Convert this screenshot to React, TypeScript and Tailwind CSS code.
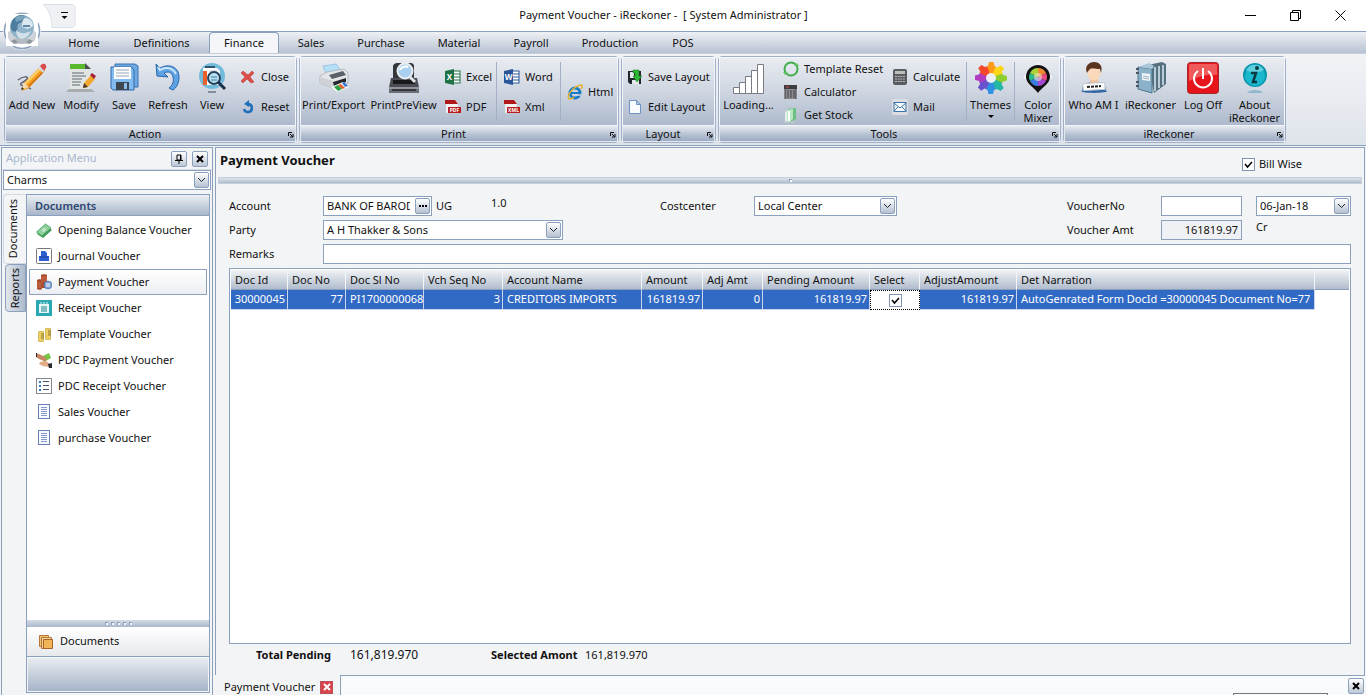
import type { ReactNode } from "react"
import clsx from "clsx"

/* ---------- icons ---------- */

function Svg({ size = 32, children }: { size?: number; children: ReactNode }) {
  return (
    <svg width={size} height={size} viewBox={size === 16 ? "0 0 16 16" : "0 0 32 32"} fill="none" className="shrink-0" aria-hidden="true">
      {children}
    </svg>
  )
}

const GlobeLogo = () => (
  <svg width="42" height="42" viewBox="0 0 42 42" fill="none" aria-hidden="true">
    <circle cx="21" cy="21" r="19" fill="#e9edf2" />
    <circle cx="21" cy="21" r="17.500" fill="#fff" stroke="#8ba0bd" strokeWidth="1.500" />
    <path d="M5 4h32v32H5z" fill="#fff" />
    <ellipse cx="21" cy="29" rx="13" ry="5" fill="#b4bbc1" />
    <path d="M7 22l5-3 5 8-5 6-5-5zM35 22l-5-3-5 8 5 6 5-5z" fill="#cdd3d8" />
    <path d="M10 31l4-2 3 4-4 1zM32 31l-4-2-3 4 4 1z" fill="#8e979e" />
    <circle cx="21" cy="17" r="12" fill="#8fb3ca" />
    <path d="M11 11c4-6 9-7 13-5l-3 6-4 2-1 8-5-1c-2-4-1-7 0-10z" fill="#4c7d9f" />
    <path d="M14 8c3-3 7-3 10-2l-3 4-6 2z" fill="#7aa3bd" />
    <path d="M24 8c5 0 8 4 8 8l-5 3-6-2c0-4 0-7 3-9z" fill="#dbe8f0" />
    <path d="M15 20c4 4 9 4 15 1-2 5-6 8-10 8-3-1-5-4-5-9z" fill="#d3e0e8" />
    <path d="M22 16h7" stroke="#5e8aa8" strokeWidth="2" />
  </svg>
)

const PencilIcon = () => (
  <Svg>
    <path d="M2 18c5-4 11-4 9-1s-8 4-6 6 6 1 10 4" stroke="#5f6671" strokeWidth="1.500" />
    <path d="M8 21L24 5l5 4-16 17-7 3z" fill="#f5a020" />
    <path d="M9 22L25 6" stroke="#ffd36b" strokeWidth="2" />
    <path d="M12 25L28 9" stroke="#cf6d10" strokeWidth="1.500" />
    <path d="M22 6l5 5 2-2-5-5z" fill="#d5dae0" />
    <path d="M24 4l2-2c3-1 5 1 4 4l-2 3z" fill="#d94b4b" />
    <path d="M8 21l-3 7 8-3z" fill="#f3d9ad" />
    <path d="M6 25l-1 3 3-1z" fill="#222" />
  </Svg>
)

const ModifyIcon = () => (
  <Svg>
    <path d="M5 2h20v27H3l2-4z" fill="#e3e5e5" />
    <path d="M1 30h29l-4-3H4z" fill="#a8adb0" />
    <path d="M5 2h15l5 5H5z" fill="#58b82c" />
    <path d="M20 1l6 6h-6z" fill="#4b5052" />
    <path d="M7 11h12M7 14h14M7 17h10M7 20h9M7 23h8" stroke="#8b9296" strokeWidth="1.500" />
    <path d="M19 21l7-8 4 4-7 8-5 1z" fill="#f3a72d" />
    <path d="M25 13l2-2 4 3-2 3z" fill="#a32035" />
    <path d="M18 26l1-5 4 4z" fill="#4a3a28" />
  </Svg>
)

const SaveIcon = () => (
  <Svg>
    <path d="M7 2h20l3 2v21H7z" fill="#6ea8e0" stroke="#3a72b4" />
    <path d="M3 5h20l3 3v20H5l-2-2z" fill="#82bbef" stroke="#2f69ad" />
    <rect x="6" y="5" width="17" height="12" fill="#fbfcfe" />
    <path d="M8 8h13M8 11h13M8 14h13" stroke="#9aa6b5" />
    <rect x="8" y="20" width="13" height="8" fill="#3d4651" />
    <rect x="16" y="21" width="3" height="6" fill="#8cbdec" />
  </Svg>
)

const RefreshIcon = () => (
  <Svg>
    <path d="M5 14L4 2l4 4c9-5 19-1 19 9 0 7-3 11-6 13l-4-2c4-3 5-7 4-11-1-5-5-6-9-4l4 4z" fill="#5da3e4" stroke="#2a64a8" strokeLinejoin="round" />
    <path d="M6 5l2 3c6-4 13-2 16 4" stroke="#cde6fb" strokeWidth="2" />
  </Svg>
)

const ViewIcon = () => (
  <Svg>
    <circle cx="16" cy="14" r="13" fill="#73bbdb" />
    <path d="M7 6h14l3 3v14H7z" fill="#fff" />
    <path d="M9 5h10" stroke="#35556f" strokeWidth="2" />
    <path d="M7 9h4v14H7z" fill="#e8612a" />
    <path d="M13 9h8" stroke="#b5bec6" />
    <circle cx="18" cy="16" r="6" fill="#b9e1f2" stroke="#26425e" strokeWidth="2" />
    <path d="M15 15h6M15 18h6" stroke="#43789b" />
    <path d="M22 20l7 7" stroke="#17304b" strokeWidth="3" />
    <path d="M12 30h8" stroke="#858d98" strokeWidth="2" />
  </Svg>
)

const CloseIcon = () => (
  <Svg size={16}>
    <path d="M3 2l5 4 4-4 2 2-4 4 4 5-3 1-4-4-4 4-2-2 4-4-4-4z" fill="#dd4f4a" stroke="#b93030" strokeWidth="0.500" />
  </Svg>
)

const ResetIcon = () => (
  <Svg size={16}>
    <path d="M8 5a4 4 0 1 1-4 5" stroke="#1f70b8" strokeWidth="2.500" />
    <path d="M4 5l5-4v7z" fill="#1f70b8" />
  </Svg>
)

const PrinterIcon = () => (
  <Svg>
    <path d="M5 4l13-2 6 8-15 4z" fill="#b5def7" stroke="#6aa9d0" strokeWidth="0.500" />
    <path d="M2 14l7-4 17-3 4 4v10l-13 6-15-6z" fill="#e3e5e8" stroke="#8c9197" strokeWidth="0.500" />
    <path d="M11 13l14-4 3 4-14 4z" fill="#5a6067" />
    <path d="M2 15l13 4v7L2 21z" fill="#cfd2d6" />
    <path d="M15 20l13-4v4l-12 5z" fill="#24282d" />
    <path d="M13 25l12-5 6 5-12 5z" fill="#f6faf6" />
    <path d="M16 25l4-2 4 4-4 2z" fill="#28a048" />
    <path d="M20 23l3-1 4 4-3 1z" fill="#e2602a" />
    <path d="M24 21l2-1 4 4-3 1z" fill="#3b78d6" />
  </Svg>
)

const PreviewIcon = () => (
  <Svg>
    <path d="M5 5c0-3 2-4 5-4h12c3 0 4 1 4 4v14H5z" fill="#33363b" />
    <path d="M3 16h26l2 9H1z" fill="#4b4f55" />
    <path d="M5 18h22v4H5z" fill="#17191b" />
    <rect x="1" y="25" width="30" height="6" fill="#6b6f75" />
    <path d="M1 26h30" stroke="#b9bdc3" />
    <path d="M4 28h24" stroke="#34373b" strokeWidth="2" />
    <circle cx="17" cy="9" r="7.500" fill="#a9d0ef" stroke="#e9edf1" strokeWidth="2" />
    <path d="M12 8c1-3 5-4 8-3" stroke="#fff" strokeWidth="2" />
    <path d="M22 15l5 5" stroke="#dfe3e8" strokeWidth="3" />
  </Svg>
)

const OfficeIcon = ({ color, letter }: { color: string; letter: string }) => (
  <Svg size={16}>
    <rect x="8" y="2" width="7" height="12" fill="#fff" stroke={color} />
    <path d="M9 5h6M9 8h6M9 11h6" stroke={color} />
    <path d="M0 2l9-2v16l-9-2z" fill={color} />
    <text x="4.500" y="11" textAnchor="middle" fill="#fff" className="font-['Noto_Sans'] text-[8px] font-bold">{letter}</text>
  </Svg>
)

const FileTagIcon = ({ tag }: { tag: string }) => (
  <Svg size={16}>
    <path d="M1 1h9l3 3v10H1z" fill="#f4f4f5" stroke="#cfd1d5" strokeWidth="0.500" />
    <path d="M0 1h10l3 4H0z" fill="#b01919" />
    <rect x="3" y="8" width="13" height="6" fill="#b81c1c" />
    <text x="9.500" y="13" textAnchor="middle" fill="#fff" className="font-['Noto_Sans'] text-[5px] font-bold">{tag}</text>
  </Svg>
)

const HtmlIcon = () => (
  <Svg size={16}>
    <circle cx="8" cy="9" r="5" stroke="#1a7cc4" strokeWidth="3" />
    <path d="M4 9h8" stroke="#1a7cc4" strokeWidth="2" />
    <path d="M9 11h7" stroke="#cdd5e0" strokeWidth="1.500" />
    <path d="M2 15C-1 11 7 2 14 1c2 0 1 3 0 4" stroke="#e3b12a" strokeWidth="1.500" />
    <path d="M2 15c2 0 4-1 5-2" stroke="#e3b12a" strokeWidth="1.500" />
  </Svg>
)

const SaveLayoutIcon = () => (
  <Svg size={16}>
    <path d="M1 2h13v13H3l-2-2z" fill="#22262a" />
    <path d="M3 3h4v6H3zM5 11h7v4H5z" fill="#e5e8eb" />
    <path d="M6 1h6v6h3l-5 6-4-6h2V4H6z" fill="#2fb636" stroke="#14801b" strokeWidth="0.500" />
  </Svg>
)

const PageIcon = () => (
  <Svg size={16}>
    <path d="M2.500 1.500h7l4 4v9h-11z" fill="#f8fbff" stroke="#6d93c4" />
    <path d="M9.500 1.500v4h4z" fill="#b5cdec" stroke="#6d93c4" />
  </Svg>
)

const BarsIcon = () => (
  <Svg>
    <path d="M0.500 25.500h6v6h-6zM6.500 20.500h6v11h-6zM12.500 14.500h6v17h-6zM18.500 8.500h6v23h-6zM24.500 2.500h6v29h-6z" fill="#fff" stroke="#777b82" />
  </Svg>
)

const RingIcon = () => (
  <Svg size={16}>
    <circle cx="8" cy="8" r="6.500" stroke="#42ad4c" strokeWidth="2" />
    <path d="M0 11h5l-3 3zM16 5h-5l3-3z" fill="#5fc468" />
  </Svg>
)

const CalcIcon = () => (
  <Svg size={16}>
    <path d="M1 1h13v4H1z" fill="#3c3b40" />
    <path d="M2 5h11v10H2z" fill="#8b8b90" />
    <path d="M4 7h8M4 9h8M4 11h8M4 13h8" stroke="#45454a" strokeDasharray="2 1" />
    <path d="M2 5v10M13 5v10" stroke="#3c3b40" />
    <path d="M3 3h3" stroke="#d14b4b" />
  </Svg>
)

const StockIcon = () => (
  <Svg size={16}>
    <path d="M2 5l3-2v12l-3-1z" fill="#e5f2e7" />
    <path d="M5 2l8-1v11l-6 3z" fill="#6cc081" />
    <path d="M4 3l6-1v10l-4 3H4z" fill="#b9e6c2" />
    <path d="M6 4v10" stroke="#fff" strokeWidth="2" />
    <path d="M1 15h11" stroke="#c2d4cb" />
  </Svg>
)

const CalculateIcon = () => (
  <Svg size={16}>
    <rect x="1" y="0" width="14" height="16" rx="2" fill="#5a5c60" />
    <rect x="3" y="2" width="10" height="3" fill="#b9c0b9" />
    <path d="M3 7.500h10M3 10h10M3 12.500h10" stroke="#b5b6b9" strokeDasharray="2 0.600" />
  </Svg>
)

const MailIcon = () => (
  <Svg size={16}>
    <rect x="0" y="0" width="16" height="16" rx="2" fill="#dcdee2" />
    <rect x="2" y="3.500" width="12" height="9" fill="#f3f8fd" stroke="#3f72a6" />
    <path d="M2 4l6 5 6-5M2 12l4-4M14 12l-4-4" stroke="#3f72a6" />
  </Svg>
)

const petals = [
  { angle: 0, color: "#ff9b1a" },
  { angle: 45, color: "#fbd616" },
  { angle: 90, color: "#8fce2c" },
  { angle: 135, color: "#23b7a4" },
  { angle: 180, color: "#2f8fe0" },
  { angle: 225, color: "#6a52cf" },
  { angle: 270, color: "#b13cc0" },
  { angle: 315, color: "#f4472c" },
]

const ThemesIcon = () => (
  <Svg>
    {petals.map((p) => (
      <path key={p.angle} d="M11.500 4.800L13 4l1-4h4.500l1 4 2 1-5.500 12z" fill={p.color} transform={`rotate(${p.angle} 16 16)`} />
    ))}
    <circle cx="16" cy="16" r="5" fill="#eceff4" />
  </Svg>
)

const MixerIcon = () => (
  <Svg>
    <path d="M16 0l15 15-15 16L1 15z" fill="#eff1f4" />
    <path d="M16 31c-3-5-12-9-12-16a12 12 0 0 1 24 0c0 7-9 11-12 16z" fill="#111" />
    <path d="M16 15V6a9 9 0 0 1 8 5z" fill="#f08a32" />
    <path d="M16 15l8-4a9 9 0 0 1 0 8z" fill="#ea4b80" />
    <path d="M16 15l8 4a9 9 0 0 1-8 5z" fill="#a347d2" />
    <path d="M16 15v9a9 9 0 0 1-8-5z" fill="#3a7be0" />
    <path d="M16 15l-8 4a9 9 0 0 1 0-8z" fill="#2cba8c" />
    <path d="M16 15l-8-4a9 9 0 0 1 8-5z" fill="#a8d439" />
    <circle cx="16" cy="15" r="4" fill="#f6e4cf" opacity="0.600" />
  </Svg>
)

const PersonIcon = () => (
  <Svg>
    <path d="M4 28c0-6 5-8 12-8s12 2 12 8z" fill="#3f86cc" />
    <path d="M3 29c2-2 24-2 26 0s-24 3-26 0z" fill="#2c64a4" />
    <path d="M12 17h8v4l-4 4-4-4z" fill="#eebf98" />
    <ellipse cx="16" cy="11" rx="6.500" ry="7.500" fill="#f9d9b9" />
    <path d="M9 11C6 4 11 0 16 0c6 0 9 4 7 11l-1-4c-4 0-8-1-10 0-1 1-2 2-3 4z" fill="#5b3420" />
    <rect x="5" y="21" width="22" height="7" rx="1" fill="#fff" stroke="#bcc4cd" transform="rotate(-3 16 25)" />
    <path d="M9 25l14-1" stroke="#222" strokeWidth="2" strokeDasharray="3 1" />
  </Svg>
)

const BooksIcon = () => (
  <Svg>
    <path d="M13 3l14-3 4 2v20l-12 9z" fill="#56707f" />
    <path d="M20 5v24M24 4v22M28 3v20" stroke="#b9cdd8" strokeWidth="2" />
    <path d="M3 5l14 2v24L3 27z" fill="#8cb2ca" stroke="#4d7690" />
    <path d="M3 5l11-4 5 3-2 3z" fill="#a9c7d9" />
    <path d="M7 11l8 1v7l-8-1z" fill="#f1f6f9" />
    <path d="M8 14l6 1M8 16l6 1" stroke="#9fb3c0" />
    <path d="M1 7h3M1 11h3M1 20h3M1 24h3" stroke="#4a5862" strokeWidth="2" />
  </Svg>
)

const PowerIcon = () => (
  <Svg>
    <rect x="0.500" y="0.500" width="31" height="31" rx="3" fill="#e8141c" stroke="#a0282c" />
    <path d="M2 3c0-1 1-1 2-1h24c1 0 2 0 2 1v10C20 12 10 15 2 19z" fill="#f15a5a" />
    <path d="M11 9a9 9 0 1 0 10 0" stroke="#fff" strokeWidth="2" />
    <path d="M16 6v11" stroke="#fff" strokeWidth="2" />
  </Svg>
)

const InfoIcon = () => (
  <Svg>
    <path d="M8 31c2-4 14-4 16 0z" fill="#8fb9cb" />
    <circle cx="16" cy="13" r="12" fill="#0796ac" />
    <circle cx="16" cy="14" r="10" fill="#19b8ce" />
    <path d="M7 8c4-7 14-7 18 0-5 3-13 3-18 0z" fill="#5fcfdf" />
    <circle cx="18" cy="6" r="2" fill="#0b3a44" />
    <path d="M12 11h5l-3 9h4" stroke="#0b3a44" strokeWidth="2.500" />
  </Svg>
)

const MoneyIcon = () => (
  <Svg size={16}>
    <path d="M1 12l9-8 6 4-9 8z" fill="#3f9b55" />
    <path d="M0.500 10l9-8 5.500 4-9 8z" fill="#8fd09c" stroke="#3f9b55" strokeWidth="0.800" />
    <path d="M6 7l4 3" stroke="#4ca862" />
    <circle cx="8" cy="8" r="2" fill="#c4e7ca" />
  </Svg>
)

const JournalIcon = () => (
  <Svg size={16}>
    <rect x="0.500" y="0.500" width="15" height="15" rx="1" fill="#fff" stroke="#777" />
    <path d="M3 8h2V3h4l2 2v3h2v5H3z" fill="#2b5fd0" />
    <path d="M4 9h8" stroke="#194398" />
  </Svg>
)

const CoinsIcon = () => (
  <Svg size={16}>
    <path d="M5 1c1-1 5-1 6 0v13H5zM1 6c1-1 4-1 5 0v9c-1 1-4 1-5 0z" fill="#a7492c" />
    <path d="M5 3h6M5 5h6M5 7h6M1 9h5M1 11h5M1 13h5" stroke="#c9714d" />
    <circle cx="12" cy="11" r="4" fill="#7c9dd0" stroke="#43679f" strokeWidth="0.500" />
    <path d="M10 10h4M10 12h4" stroke="#fff" />
  </Svg>
)

const ReceiptIcon = () => (
  <Svg size={16}>
    <rect width="16" height="16" fill="#2ba8b4" />
    <path d="M3 4h10v9H3z" fill="#e6f6f7" />
    <path d="M5 2v3M8 2v3M11 2v3" stroke="#e6f6f7" />
    <path d="M5 7h6M5 9h6M5 11h6" stroke="#1c8490" />
  </Svg>
)

const TemplateIcon = () => (
  <Svg size={16}>
    <path d="M2.500 5.500h5v10h-5zM9.500 2.500h5v11h-5z" fill="#ebcf62" stroke="#d1b150" strokeWidth="0.800" />
    <path d="M5 8h3M5 10h3M5 12h3M12 5h3M12 7h3M12 9h3" stroke="#7b6420" strokeWidth="0.800" />
  </Svg>
)

const HandsIcon = () => (
  <Svg size={16}>
    <path d="M5 5l8-4 2 5-7 4z" fill="#77c545" />
    <path d="M0 1l3 1 6 3 2 3-3 1-5-2-3-2z" fill="#c88562" />
    <path d="M4 10l6-1 4 3-1 3-6-1-4-2z" fill="#e2ab86" />
    <path d="M12 12l4-1v5h-3zM0 1h1v4H0z" fill="#262a30" />
  </Svg>
)

const BulletsIcon = () => (
  <Svg size={16}>
    <rect x="0.500" y="0.500" width="15" height="15" fill="#fff" stroke="#868b92" />
    <path d="M3 4h2M3 8h2M3 12h2" stroke="#2a7fc4" strokeWidth="2" />
    <path d="M7 3.500h6M7 7.500h6M7 11.500h6" stroke="#4c525b" />
  </Svg>
)

const SheetIcon = () => (
  <Svg size={16}>
    <rect x="2.500" y="0.500" width="11" height="14" fill="#f7f9ff" stroke="#6b7fb9" />
    <path d="M5 3.500h6M5 5.500h6M5 7.500h6M5 9.500h6M5 11.500h6" stroke="#8798cc" />
  </Svg>
)

const FoldersIcon = () => (
  <Svg size={16}>
    <path d="M1.500 1.500h9v11h-9z" fill="#f0c375" stroke="#b87835" />
    <path d="M3.500 3.500h10v11h-10z" fill="#f5d595" stroke="#b87835" />
    <path d="M5.500 5.500h9v9h-9z" fill="#f0b556" stroke="#a8642a" />
  </Svg>
)

const Chevron = () => (
  <svg width="7" height="4" viewBox="0 0 7 4" fill="none" aria-hidden="true">
    <path d="M0 0l3.500 3.500L7 0" stroke="#222" />
  </svg>
)

/* ---------- ribbon ---------- */

function BigButton({ icon, label, width, arrow }: { icon: ReactNode; label: string; width: string; arrow?: boolean }) {
  return (
    <button type="button" className={clsx("flex shrink-0 flex-col items-center pt-1 leading-[13px]", width)}>
      <span className="flex h-9 items-start">{icon}</span>
      <span className="whitespace-pre">{label}</span>
      {arrow && <span className="mt-1 border-x-[3px] border-t-[3px] border-x-transparent border-t-black" />}
    </button>
  )
}

function SmallButton({ icon, label }: { icon: ReactNode; label: string }) {
  return (
    <button type="button" className="flex items-center gap-[5px] whitespace-nowrap leading-4">
      {icon}
      {label}
    </button>
  )
}

function SmallStack({ children, className }: { children: ReactNode; className?: string }) {
  return <div className={clsx("flex shrink-0 flex-col justify-center", className)}>{children}</div>
}

const Separator = () => <div className="my-1 w-px shrink-0 bg-[#a3b0c5]" />

function RibbonGroup({ title, width, children }: { title: string; width: string; children: ReactNode }) {
  return (
    <section className={clsx("flex shrink-0 flex-col rounded-sm border border-[#9fb0c8]", width)}>
      <div className="flex flex-1 border border-[#f3f6fa] bg-linear-to-b from-[#e9ecf1] via-[#cfd6e1] to-[#adb9cc]">{children}</div>
      <div className="relative h-4 border border-[#e3e8ef] bg-linear-to-b from-[#e2e7ee] via-[#b9c4d4] to-[#9cabc3] pr-[11px] text-center leading-[13px]">
        {title}
        <svg width="6" height="6" viewBox="0 0 6 6" fill="none" className="absolute right-px bottom-[3px]" aria-hidden="true">
          <path d="M0.500 4V0.500H4M2 2l3 3M5 2v3H2" stroke="#111" />
        </svg>
      </div>
    </section>
  )
}

const tabs = [
  { label: "Home", width: "w-[60px]" },
  { label: "Definitions", width: "w-[87px]" },
  { label: "Finance", width: "w-[70px]" },
  { label: "Sales", width: "w-[56px]" },
  { label: "Purchase", width: "w-[76px]" },
  { label: "Material", width: "w-[72px]" },
  { label: "Payroll", width: "w-[64px]" },
  { label: "Production", width: "w-[86px]" },
  { label: "POS", width: "w-[52px]" },
]

function TitleBar() {
  return (
    <header className="relative flex h-[31px] shrink-0 items-center bg-white">
      <div className="absolute top-[10px] left-px z-10">
        <GlobeLogo />
      </div>
      <button type="button" aria-label="Customize" className="ml-[43px]">
        <svg width="33" height="24" viewBox="0 0 33 24" fill="none" aria-hidden="true">
          <path d="M0 0.500h30l2 2v19l-2 2H9C9 14 6 5 0 0.500z" fill="#eff1f5" stroke="#dbe0e8" />
          <path d="M18 8.500h7" stroke="#000" />
          <path d="M18.500 12h6l-3 3z" fill="#000" />
        </svg>
      </button>
      <h1 className="flex-1 pl-[6px] text-center">Payment Voucher - iReckoner -&nbsp; [ System Administrator ]</h1>
      <div className="flex items-center gap-[34px] pr-5">
        <button type="button" aria-label="Minimize">
          <svg width="11" height="11" fill="none"><path d="M0 5.500h11" stroke="#000" /></svg>
        </button>
        <button type="button" aria-label="Restore">
          <svg width="11" height="11" fill="none"><path d="M0.500 2.500h8v8h-8zM2.500 2.500v-2h8v8h-2" stroke="#000" /></svg>
        </button>
        <button type="button" aria-label="Close">
          <svg width="11" height="11" fill="none"><path d="M0.500 0.500l10 10M10.500 0.500l-10 10" stroke="#000" /></svg>
        </button>
      </div>
    </header>
  )
}

function Ribbon() {
  return (
    <>
      <nav className="flex h-[22px] shrink-0 items-end gap-1 border-t border-[#8ba0bd] bg-linear-to-b from-[#eef0f4] to-[#b7c2d2] pl-[54px]">
        {tabs.map((tab) => (
          <button
            key={tab.label}
            type="button"
            className={clsx(
              "h-[21px] shrink-0 border border-b-0 pt-px text-center",
              tab.width,
              tab.label === "Finance" ? "rounded-t-[4px] border-[#8ba0bd] bg-[#f3f5f8]" : "border-transparent"
            )}
          >
            {tab.label}
          </button>
        ))}
      </nav>
      <div className="flex h-[93px] shrink-0 gap-[2px] overflow-hidden border-y border-b-[#8ba0bd] border-t-[#c6cfdb] bg-linear-to-b from-[#f1f3f6] to-[#dfe4eb] py-[2px] pl-1">
        <RibbonGroup title="Action" width="w-[293px]">
          <BigButton icon={<PencilIcon />} label="Add New" width="w-[52px]" />
          <BigButton icon={<ModifyIcon />} label="Modify" width="w-[46px]" />
          <BigButton icon={<SaveIcon />} label="Save" width="w-[40px]" />
          <BigButton icon={<RefreshIcon />} label="Refresh" width="w-[48px]" />
          <BigButton icon={<ViewIcon />} label="View" width="w-[40px]" />
          <SmallStack className="gap-[14px] pl-2">
            <SmallButton icon={<CloseIcon />} label="Close" />
            <SmallButton icon={<ResetIcon />} label="Reset" />
          </SmallStack>
        </RibbonGroup>

        <RibbonGroup title="Print" width="w-[320px]">
          <BigButton icon={<PrinterIcon />} label="Print/Export" width="w-[65px]" />
          <BigButton icon={<PreviewIcon />} label="PrintPreView" width="w-[75px]" />
          <SmallStack className="w-[55px] gap-[14px] pl-1">
            <SmallButton icon={<OfficeIcon color="#1f7246" letter="X" />} label="Excel" />
            <SmallButton icon={<FileTagIcon tag="PDF" />} label="PDF" />
          </SmallStack>
          <Separator />
          <SmallStack className="w-[63px] gap-[14px] pl-[7px]">
            <SmallButton icon={<OfficeIcon color="#2a5699" letter="W" />} label="Word" />
            <SmallButton icon={<FileTagIcon tag="XML" />} label="Xml" />
          </SmallStack>
          <Separator />
          <SmallStack className="pl-[6px]">
            <SmallButton icon={<HtmlIcon />} label="Html" />
          </SmallStack>
        </RibbonGroup>

        <RibbonGroup title="Layout" width="w-[95px]">
          <SmallStack className="gap-[14px] pl-1">
            <SmallButton icon={<SaveLayoutIcon />} label="Save Layout" />
            <SmallButton icon={<PageIcon />} label="Edit Layout" />
          </SmallStack>
        </RibbonGroup>

        <RibbonGroup title="Tools" width="w-[343px]">
          <BigButton icon={<BarsIcon />} label="Loading..." width="w-[57px]" />
          <SmallStack className="w-[110px] gap-[7px] pl-[6px]">
            <SmallButton icon={<RingIcon />} label="Template Reset" />
            <SmallButton icon={<CalcIcon />} label="Calculator" />
            <SmallButton icon={<StockIcon />} label="Get Stock" />
          </SmallStack>
          <SmallStack className="w-[79px] gap-[14px] pl-[5px]">
            <SmallButton icon={<CalculateIcon />} label="Calculate" />
            <SmallButton icon={<MailIcon />} label="Mail" />
          </SmallStack>
          <Separator />
          <BigButton icon={<ThemesIcon />} label="Themes" width="w-[47px]" arrow />
          <Separator />
          <BigButton icon={<MixerIcon />} label={"Color\nMixer"} width="w-[46px]" />
        </RibbonGroup>

        <RibbonGroup title="iReckoner" width="w-[223px]">
          <BigButton icon={<PersonIcon />} label="Who AM I" width="w-[57px]" />
          <BigButton icon={<BooksIcon />} label="iReckoner" width="w-[57px]" />
          <BigButton icon={<PowerIcon />} label="Log Off" width="w-[48px]" />
          <BigButton icon={<InfoIcon />} label={"About\niReckoner"} width="w-[55px]" />
        </RibbonGroup>
      </div>
    </>
  )
}

/* ---------- side menu ---------- */

const menuItems = [
  { label: "Opening Balance Voucher", icon: <MoneyIcon /> },
  { label: "Journal Voucher", icon: <JournalIcon /> },
  { label: "Payment Voucher", icon: <CoinsIcon />, active: true },
  { label: "Receipt Voucher", icon: <ReceiptIcon /> },
  { label: "Template Voucher", icon: <TemplateIcon /> },
  { label: "PDC Payment Voucher", icon: <HandsIcon /> },
  { label: "PDC Receipt Voucher", icon: <BulletsIcon /> },
  { label: "Sales Voucher", icon: <SheetIcon /> },
  { label: "purchase Voucher", icon: <SheetIcon /> },
]

function GlyphButton({ label, children }: { label: string; children: ReactNode }) {
  return (
    <button type="button" aria-label={label} className="flex size-4 shrink-0 items-center justify-center rounded-[2px] border border-[#8ba0bd] bg-linear-to-b from-white to-[#bcc7d6]">
      {children}
    </button>
  )
}

const CrossGlyph = ({ color = "#000" }: { color?: string }) => (
  <svg width="8" height="8" viewBox="0 0 8 8" fill="none" aria-hidden="true">
    <path d="M1 1l6 6M7 1L1 7" stroke={color} strokeWidth="2" />
  </svg>
)

function SelectBox({ id, label, value, className }: { id: string; label?: string; value: string; className?: string }) {
  return (
    <div className={clsx("relative h-5 border border-[#8ba0bd] bg-white", className)}>
      <select id={id} aria-label={label} className="block h-[18px] w-full appearance-none bg-transparent pr-5 pl-[3px] leading-[18px] outline-none">
        <option>{value}</option>
      </select>
      <span className="pointer-events-none absolute top-px right-px bottom-px flex w-[15px] items-center justify-center rounded-[2px] border border-[#8ba0bd] bg-linear-to-b from-white to-[#b4c0d1]">
        <Chevron />
      </span>
    </div>
  )
}

function SideMenu() {
  return (
    <aside className="flex w-[212px] shrink-0 flex-col border border-b-0 border-[#8ba0bd] bg-[#f3f4f6]">
      <div className="flex h-[22px] items-center gap-[5px] border-b border-[#d3dae4] px-1 text-[#a9b7cf]">
        <h2 className="flex-1">Application Menu</h2>
        <GlyphButton label="Pin">
          <svg width="8" height="10" viewBox="0 0 8 10" fill="none" aria-hidden="true">
            <path d="M2 1h4v5H2zM0 6.500h8M4 6v4M5.500 1v5" stroke="#000" />
          </svg>
        </GlyphButton>
        <GlyphButton label="Close menu">
          <CrossGlyph />
        </GlyphButton>
      </div>
      <SelectBox id="company" label="Company" value="Charms" className="mr-px ml-px" />
      <div className="flex min-h-0 flex-1 pt-1 pr-[2px]">
        <div className="flex w-[24px] shrink-0 flex-col items-end">
          <button type="button" className="flex h-[70px] w-[23px] items-center justify-center rounded-l-[4px] border border-r-0 border-[#d3dae4] pr-[3px]">
            <span className="rotate-180 [writing-mode:vertical-rl]">Documents</span>
          </button>
          <button type="button" className="flex h-12 w-[21px] items-center justify-center rounded-l-[4px] border border-[#8ba0bd] bg-linear-to-r from-[#e2e6ed] to-[#adb9cb] pr-px">
            <span className="rotate-180 [writing-mode:vertical-rl]">Reports</span>
          </button>
        </div>
        <div className="flex min-w-0 flex-1 flex-col border border-[#8ba0bd] bg-white">
          <h3 className="h-[21px] shrink-0 border-b border-[#8ba0bd] bg-linear-to-b from-[#eceff3] to-[#a9b6ca] pl-2 leading-[21px] font-semibold text-[#2b4570]">Documents</h3>
          <ul className="flex-1 px-[2px] pt-px">
            {menuItems.map((item) => (
              <li key={item.label}>
                <a
                  href="#"
                  className={clsx(
                    "flex h-[26px] items-center gap-[6px] border pl-[6px]",
                    item.active ? "border-[#8ba0bd] bg-linear-to-b from-white to-[#eceef2]" : "border-transparent"
                  )}
                >
                  {item.icon}
                  {item.label}
                </a>
              </li>
            ))}
          </ul>
          <div className="flex h-[7px] shrink-0 items-center justify-center gap-[3px] bg-linear-to-b from-[#d5dbe4] to-[#aab7ca]">
            {[0, 1, 2, 3, 4].map((i) => (
              <span key={i} className="size-[3px] border-t border-l border-[#8ba0bd] bg-[#f3f5f8]" />
            ))}
          </div>
          <button type="button" className="flex h-[30px] shrink-0 items-center gap-[6px] border-b border-[#8ba0bd] bg-linear-to-b from-white to-[#e7e9ed] pl-[11px]">
            <FoldersIcon />
            Documents
          </button>
          <div className="h-[35px] shrink-0 border border-[#f3f5f8] bg-linear-to-b from-[#e9ecf0] to-[#a6b4c9]" />
        </div>
      </div>
      <div className="h-[2px] shrink-0" />
    </aside>
  )
}

/* ---------- voucher form ---------- */

const columns = [
  { title: "Doc Id", width: "w-[57px]", value: "30000045", right: true },
  { title: "Doc No", width: "w-[58px]", value: "77", right: true },
  { title: "Doc Sl No", width: "w-[78px]", value: "PI1700000068" },
  { title: "Vch Seq No", width: "w-[79px]", value: "3", right: true },
  { title: "Account Name", width: "w-[139px]", value: "CREDITORS IMPORTS" },
  { title: "Amount", width: "w-[61px]", value: "161819.97", right: true },
  { title: "Adj Amt", width: "w-[60px]", value: "0", right: true },
  { title: "Pending Amount", width: "w-[107px]", value: "161819.97", right: true },
  { title: "Select", width: "w-[50px]", check: true },
  { title: "AdjustAmount", width: "w-[97px]", value: "161819.97", right: true },
  { title: "Det Narration", width: "w-[298px]", value: "AutoGenrated Form DocId =30000045 Document No=77" },
]

function CheckBox({ id, label }: { id: string; label?: string }) {
  return (
    <span className="relative inline-flex size-[13px] shrink-0 align-middle">
      <input id={id} type="checkbox" defaultChecked aria-label={label} className="peer size-[13px] appearance-none border border-[#7f95b3] bg-white" />
      <svg width="13" height="13" fill="none" className="pointer-events-none absolute inset-0 hidden peer-checked:block" aria-hidden="true">
        <path d="M3 6l2.500 3L10 4" stroke="#000" strokeWidth="1.500" />
      </svg>
    </span>
  )
}

const field = "h-5 border border-[#8ba0bd] px-[3px] outline-none"
const headCell = "border-b border-b-[#8ba0bd] bg-linear-to-b from-[#f1f3f5] to-[#b0bccd] p-0"

function VoucherGrid() {
  return (
    <div className="mx-[13px] mt-1 min-h-0 flex-1 overflow-hidden border border-[#8ba0bd] bg-white p-px">
      <table className="w-full table-fixed border-separate border-spacing-0">
        <thead>
          <tr className="h-5">
            {columns.map((col) => (
              <th key={col.title} className={clsx(headCell, "border-r border-r-[#f3f5f8] pl-1 text-left leading-4 font-normal whitespace-nowrap", col.width)}>
                {col.title}
              </th>
            ))}
            <th aria-label="Filler" className={headCell} />
          </tr>
        </thead>
        <tbody>
          <tr className="h-5 text-white">
            {columns.map((col) => (
              <td
                key={col.title}
                className={clsx(
                  "p-0 whitespace-nowrap",
                  col.check ? "border border-dotted border-black bg-white text-center leading-none" : "border-r border-b border-r-[#c9d5ec] border-b-[#c9d5ec] bg-[#316ac5] pb-[2px] leading-4",
                  !col.check && (col.right ? "pr-[2px] text-right" : "pl-1")
                )}
              >
                {col.check ? <CheckBox id="row-select" label="Select row" /> : col.value}
              </td>
            ))}
            <td className="p-0" />
          </tr>
        </tbody>
      </table>
    </div>
  )
}

function VoucherForm() {
  return (
    <main className="mr-px ml-[2px] flex min-w-0 flex-1 flex-col bg-[#f3f4f6]">
      <div className="flex min-h-0 flex-1 flex-col border-x border-t border-[#8ba0bd]">
        <div className="flex h-[29px] shrink-0 items-start justify-between pr-[62px] pl-1">
          <h2 className="pt-1 text-[13px] leading-4 font-bold">Payment Voucher</h2>
          <div className="flex items-center gap-1 pt-2">
            <CheckBox id="bill-wise" />
            <label htmlFor="bill-wise">Bill Wise</label>
          </div>
        </div>
        <div className="mx-[2px] flex h-[7px] shrink-0 items-center justify-center border border-[#c5cedb] bg-linear-to-b from-[#dfe4eb] to-[#afbbcd]">
          <span className="size-[3px] border-t border-l border-[#8ba0bd] bg-white" />
        </div>

        <form className="mt-3 flex shrink-0 flex-col gap-1 px-[13px] leading-5">
          <div className="flex">
            <label htmlFor="account" className="w-[94px] shrink-0">Account</label>
            <div className="flex h-5 w-[109px] shrink-0 border border-[#8ba0bd] bg-white">
              <input id="account" defaultValue="BANK OF BARODA" className="mr-1 min-w-0 flex-1 pl-[3px] outline-none" />
              <button type="button" aria-label="Browse accounts" className="m-px flex w-[15px] items-center justify-center gap-px rounded-[2px] border border-[#8ba0bd] bg-linear-to-b from-white to-[#b4c0d1]">
                <span className="size-[2px] bg-black" />
                <span className="size-[2px] bg-black" />
                <span className="size-[2px] bg-black" />
              </button>
            </div>
            <span className="w-[59px] shrink-0 pl-1">UG</span>
            <span className="leading-[14px]">1.0</span>
            <div className="ml-auto flex">
              <label htmlFor="costcenter" className="w-[94px]">Costcenter</label>
              <SelectBox id="costcenter" value="Local Center" className="w-[143px]" />
            </div>
            <div className="ml-[170px] flex">
              <label htmlFor="voucher-no" className="w-[94px]">VoucherNo</label>
              <input id="voucher-no" className={clsx(field, "w-[81px] bg-white")} />
              <SelectBox id="voucher-date" label="Voucher date" value="06-Jan-18" className="ml-[14px] w-[95px]" />
            </div>
          </div>
          <div className="flex">
            <label htmlFor="party" className="w-[94px] shrink-0">Party</label>
            <SelectBox id="party" value="A H Thakker &amp; Sons" className="w-[240px]" />
            <div className="ml-auto flex">
              <label htmlFor="voucher-amt" className="w-[94px]">Voucher Amt</label>
              <input id="voucher-amt" readOnly defaultValue="161819.97" className={clsx(field, "w-[81px] bg-[#f0f1f4] text-right")} />
              <span className="ml-[14px] w-[95px] leading-[14px]">Cr</span>
            </div>
          </div>
          <div className="flex">
            <label htmlFor="remarks" className="w-[94px] shrink-0">Remarks</label>
            <input id="remarks" className={clsx(field, "min-w-0 flex-1 bg-white")} />
          </div>
        </form>

        <VoucherGrid />

        <div className="flex h-[31px] shrink-0 items-start pt-[3px] pl-10 leading-4">
          <span className="w-[94px] font-bold">Total Pending</span>
          <span className="w-[141px] text-[12px]">161,819.970</span>
          <span className="w-[94px] font-bold">Selected Amont</span>
          <span>161,819.970</span>
        </div>
      </div>

      <div className="flex h-5 shrink-0">
        <div className="flex w-[125px] shrink-0 items-center gap-[5px] pt-1 pl-[9px]">
          <button type="button" className="whitespace-nowrap">Payment Voucher</button>
          <button type="button" aria-label="Close tab" className="flex size-[13px] shrink-0 items-center justify-center border border-[#b9525a] bg-[#d9434b]">
            <CrossGlyph color="#fff" />
          </button>
        </div>
        <div className="flex flex-1 items-start justify-end border-t border-l border-[#8ba0bd] bg-[#f8fafc] pt-[2px] pr-px">
          <div className="mt-[15px] mr-5 h-[2px] w-[95px] border border-b-0 border-[#777]" />
          <GlyphButton label="Close all">
            <CrossGlyph />
          </GlyphButton>
        </div>
      </div>
    </main>
  )
}

export default function App() {
  return (
    <div className="flex h-screen flex-col overflow-hidden bg-[#f3f4f6] font-['Noto_Sans','Open_Sans',sans-serif] text-[11px] text-[#111]">
      <TitleBar />
      <Ribbon />
      <div className="flex min-h-0 flex-1 pt-px pl-px">
        <SideMenu />
        <VoucherForm />
      </div>
    </div>
  )
}
